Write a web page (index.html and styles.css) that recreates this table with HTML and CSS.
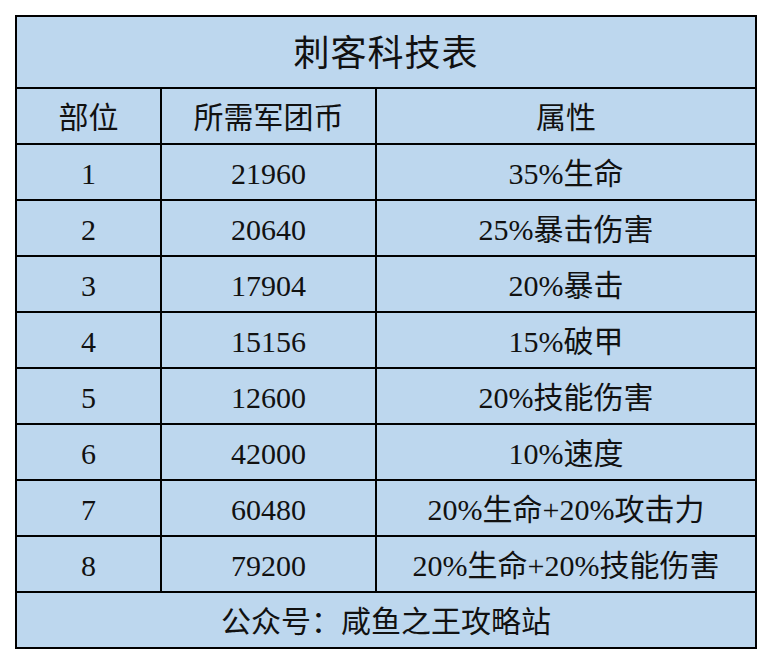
FILE: index.html
```html
<!DOCTYPE html>
<html>
<head>
<meta charset="utf-8">
<title>刺客科技表</title>
<link rel="stylesheet" href="styles.css">
</head>
<body>
<div class="table">
  <div class="cell title">刺客科技表</div>
  <div class="cell">部位</div>
  <div class="cell">所需军团币</div>
  <div class="cell">属性</div>

  <div class="cell">1</div><div class="cell">21960</div><div class="cell">35%生命</div>
  <div class="cell">2</div><div class="cell">20640</div><div class="cell">25%暴击伤害</div>
  <div class="cell">3</div><div class="cell">17904</div><div class="cell">20%暴击</div>
  <div class="cell">4</div><div class="cell">15156</div><div class="cell">15%破甲</div>
  <div class="cell">5</div><div class="cell">12600</div><div class="cell">20%技能伤害</div>
  <div class="cell">6</div><div class="cell">42000</div><div class="cell">10%速度</div>
  <div class="cell">7</div><div class="cell">60480</div><div class="cell">20%生命+20%攻击力</div>
  <div class="cell">8</div><div class="cell">79200</div><div class="cell">20%生命+20%技能伤害</div>

  <div class="cell footer">公众号：咸鱼之王攻略站</div>
</div>
</body>
</html>
```

FILE: styles.css
```css
html, body {
  margin: 0;
  padding: 0;
  background: #ffffff;
}
body {
  padding: 15px 0 0 15px;
  font-family: "Liberation Serif", "Noto Sans CJK SC", serif;
  color: #111111;
}
.table {
  display: grid;
  width: 742px;
  box-sizing: border-box;
  grid-template-columns: 143px 213px 378px;
  grid-template-rows: 70px repeat(10, 54px);
  gap: 2px;
  padding: 2px;
  background: #000000;
}
.cell {
  background: #bdd7ee;
  display: flex;
  align-items: center;
  justify-content: center;
  padding-top: 3px;
  box-sizing: border-box;
  font-size: 30px;
  line-height: 1;
  white-space: nowrap;
}
.title {
  grid-column: 1 / -1;
  font-size: 36px;
  letter-spacing: 1px;
}
.footer {
  grid-column: 1 / -1;
}
```
